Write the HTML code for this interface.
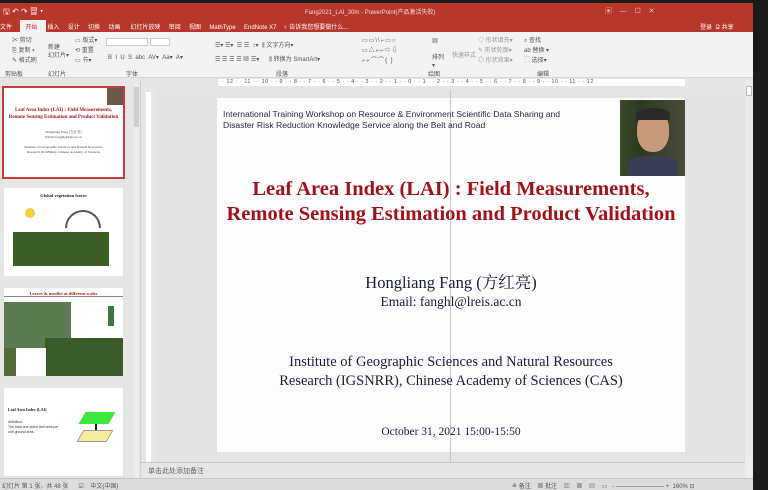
<!DOCTYPE html>
<html><head><meta charset="utf-8"><style>
*{margin:0;padding:0;box-sizing:border-box}
body{width:768px;height:490px;overflow:hidden;background:#1a1a1a;font-family:"Liberation Sans","Noto Sans CJK SC",sans-serif;position:relative}
.a{position:absolute}
.t{font-size:6px;color:#fff}
.r{font-size:6px;color:#555;white-space:nowrap}
.serif{font-family:"Liberation Serif","Noto Serif CJK SC",serif}
</style></head><body>
<div class="a" style="left:0;top:3px;width:753px;height:487px;background:#e6e6e6"></div>
<div class="a" style="left:0;top:3px;width:753px;height:29px;background:#b8372b"></div>
<div class="a t" style="left:3px;top:6px;font-size:8px">🖫 ↶ ↷ 冒 ▾</div>
<div class="a t" style="left:305px;top:7px;opacity:.8">Fang2021_LAI_30m - PowerPoint(产品激活失败)</div>
<div class="a t" style="left:605px;top:6px;opacity:.7;font-size:7px">▣ &nbsp;&nbsp; — &nbsp;&nbsp; ☐ &nbsp;&nbsp; ✕</div>
<div class="a" style="left:20px;top:20px;width:26px;height:12px;background:#f2f2f2"></div>
<div class="a t" style="left:0;top:22px;white-space:nowrap">文件 &nbsp;&nbsp;&nbsp;&nbsp;&nbsp;&nbsp; <span style="color:#b8372b">开始</span> &nbsp;&nbsp;&nbsp;&nbsp; 插入 &nbsp;&nbsp;&nbsp; 设计 &nbsp;&nbsp;&nbsp; 切换 &nbsp;&nbsp;&nbsp; 动画 &nbsp;&nbsp;&nbsp;&nbsp; 幻灯片放映 &nbsp;&nbsp;&nbsp; 审阅 &nbsp;&nbsp;&nbsp; 视图 &nbsp;&nbsp;&nbsp; MathType &nbsp;&nbsp;&nbsp; EndNote X7 &nbsp;&nbsp; ♀ 告诉我您想要做什么...</div>
<div class="a t" style="left:700px;top:22px">登录 &nbsp;Ձ 共享</div>
<div class="a" style="left:0;top:32px;width:753px;height:46px;background:#f3f3f3;border-bottom:1px solid #d6d6d6"></div>
<div class="a r" style="left:12px;top:36px;line-height:10px">✂ 剪切<br>⎘ 复制 ▾<br>✎ 格式刷</div>
<div class="a r" style="left:48px;top:44px;line-height:8px">新建<br>幻灯片▾</div>
<div class="a r" style="left:75px;top:36px;line-height:10px">▭ 版式▾<br>⟲ 重置<br>▭ 节▾</div>
<div class="a" style="left:106px;top:38px;width:42px;height:8px;background:#fff;border:1px solid #ccc"></div>
<div class="a" style="left:150px;top:38px;width:20px;height:8px;background:#fff;border:1px solid #ccc"></div>
<div class="a r" style="left:108px;top:54px">B &nbsp;I &nbsp;U &nbsp;S &nbsp;abc &nbsp;AV▾ &nbsp;Aa▾ &nbsp;A▾</div>
<div class="a r" style="left:215px;top:40px">☰▾ ☰▾ &nbsp;☰ ☰ &nbsp;↕▾ &nbsp;⫼ 文字方向▾</div>
<div class="a r" style="left:215px;top:54px">☰ ☰ ☰ ☰ ▦ ☰▾ &nbsp;&nbsp;&nbsp;&nbsp; ⫼ 转换为 SmartArt▾</div>
<div class="a r" style="left:362px;top:36px;line-height:10px;letter-spacing:1px">▭▭\\⌐▭○<br>▭△⌐⌐⇨⇩<br>⌐⌐⌒⌒{ }</div>
<div class="a r" style="left:432px;top:38px;line-height:8px">▦<br><br>排列<br>▾</div>
<div class="a r" style="left:452px;top:50px;color:#999">快速样式</div>
<div class="a r" style="left:478px;top:36px;line-height:10px;color:#999">◇ 形状填充▾<br>✎ 形状轮廓▾<br>◎ 形状效果▾</div>
<div class="a r" style="left:524px;top:36px;line-height:10px">⌕ 查找<br>ab 替换 ▾<br>⬚ 选择▾</div>
<div class="a r" style="left:5px;top:69px">剪贴板 &nbsp;&nbsp;&nbsp;&nbsp;&nbsp;&nbsp;&nbsp;&nbsp;&nbsp;&nbsp;&nbsp;&nbsp;&nbsp; 幻灯片 &nbsp;&nbsp;&nbsp;&nbsp;&nbsp;&nbsp;&nbsp;&nbsp;&nbsp;&nbsp;&nbsp;&nbsp;&nbsp;&nbsp;&nbsp;&nbsp;&nbsp;&nbsp;&nbsp;&nbsp;&nbsp;&nbsp;&nbsp;&nbsp;&nbsp;&nbsp;&nbsp;&nbsp;&nbsp;&nbsp;&nbsp;&nbsp;&nbsp;&nbsp; 字体</div>
<div class="a r" style="left:276px;top:69px">段落</div>
<div class="a r" style="left:428px;top:69px">绘图</div>
<div class="a r" style="left:537px;top:69px">编辑</div>
<div class="a" style="left:218px;top:79px;width:467px;height:7px;background:#fff"></div>
<div class="a r" style="left:222px;top:79px;font-size:5.5px;letter-spacing:.5px">· 12 · · 11 · · 10 · · 9 · · 8 · · 7 · · 6 · · 5 · · 4 · · 3 · · 2 · · 1 · · 0 · · 1 · · 2 · · 3 · · 4 · · 5 · · 6 · · 7 · · 8 · · 9 · · 10 · · 11 · · 12 ·</div>
<div class="a" style="left:146px;top:92px;width:5px;height:370px;background:#fff"></div>
<div class="a" style="left:140px;top:80px;width:1px;height:398px;background:#d0d0d0"></div>
<div class="a" style="left:134px;top:82px;width:5px;height:396px;background:#ececec"></div>
<div class="a" style="left:134px;top:87px;width:5px;height:40px;background:#cfcfcf"></div>
<div class="a" style="left:2px;top:86px;width:123px;height:93px;border:2px solid #c43b3b;background:#fff"></div>
<div class="a serif" style="left:4px;top:107px;width:119px;text-align:center;font-size:5px;font-weight:bold;color:#a01818;line-height:7px">Leaf Area Index (LAI) : Field Measurements,<br>Remote Sensing Estimation and Product Validation</div>
<div class="a" style="left:107px;top:88px;width:16px;height:17px;background:#6b5a4a"></div>
<div class="a serif" style="left:4px;top:130px;width:119px;text-align:center;font-size:3.5px;color:#444;line-height:5px">Hongliang Fang (方红亮)<br>Email: fanghl@lreis.ac.cn<br><br>Institute of Geographic Sciences and Natural Resources<br>Research (IGSNRR), Chinese Academy of Sciences</div>
<div class="a" style="left:4px;top:188px;width:119px;height:88px;background:#fff"></div>
<div class="a serif" style="left:4px;top:193px;width:119px;text-align:center;font-size:4.5px;font-weight:bold;color:#223">Global vegetation leaves</div>
<div class="a" style="left:25px;top:208px;width:10px;height:10px;border-radius:50%;background:#f0d040"></div>
<div class="a" style="left:65px;top:210px;width:36px;height:18px;border:2px solid #555;border-bottom:none;border-radius:18px 18px 0 0"></div>
<div class="a" style="left:13px;top:232px;width:96px;height:34px;background:#3e5e28"></div>
<div class="a" style="left:4px;top:288px;width:119px;height:88px;background:#fff"></div>
<div class="a serif" style="left:4px;top:291px;width:119px;text-align:center;font-size:4.5px;font-weight:bold;color:#b02020;border-bottom:1px solid #888">Leaves &amp; needles at different scales</div>
<div class="a" style="left:4px;top:302px;width:67px;height:46px;background:#5d7a52"></div>
<div class="a" style="left:45px;top:338px;width:78px;height:38px;background:#3b5a2a"></div>
<div class="a" style="left:4px;top:348px;width:42px;height:28px;background:#fff"></div>
<div class="a" style="left:4px;top:348px;width:12px;height:28px;background:#556b3c"></div>
<div class="a" style="left:108px;top:306px;width:6px;height:20px;background:#3c7a3c"></div>
<div class="a" style="left:4px;top:388px;width:119px;height:88px;background:#fff"></div>
<div class="a serif" style="left:8px;top:407px;font-size:4px;font-weight:bold;color:#222">Leaf Area Index (LAI)</div>
<div class="a" style="left:8px;top:420px;font-size:3.5px;color:#333;line-height:5px">definition:<br>The total one-sided leaf area per<br>unit ground area.</div>
<div class="a" style="left:82px;top:412px;width:30px;height:12px;background:#3ee83e;transform:skewX(-30deg)"></div>
<div class="a" style="left:95px;top:424px;width:2px;height:8px;background:#222"></div>
<div class="a" style="left:80px;top:430px;width:30px;height:12px;background:#f4f0a0;transform:skewX(-30deg);border:1px solid #999"></div>
<div class="a" style="left:155px;top:90px;width:592px;height:372px;background:#e4e4e4"></div>
<div class="a" style="left:217px;top:98px;width:468px;height:354px;background:#fdfdfd"></div>
<div class="a" style="left:450px;top:90px;width:1px;height:372px;background:#c8c8c8"></div>
<div class="a" style="left:223px;top:109px;font-size:8.6px;color:#2a2a40;line-height:10.5px">International Training Workshop on Resource &amp; Environment Scientific Data Sharing and<br>Disaster Risk Reduction Knowledge Service along the Belt and Road</div>
<div class="a" style="left:620px;top:100px;width:65px;height:76px;background:linear-gradient(90deg,#3a4a2a,#2c3a22 30%,#4a4a3a)"></div>
<div class="a" style="left:637px;top:110px;width:32px;height:42px;border-radius:45%;background:#c89a7c"></div>
<div class="a" style="left:636px;top:108px;width:34px;height:12px;border-radius:50% 50% 10% 10%;background:#2a2a2a"></div>
<div class="a" style="left:628px;top:156px;width:50px;height:20px;border-radius:40% 40% 0 0;background:#3a3e52"></div>
<div class="a serif" style="left:207px;top:177px;width:488px;text-align:center;font-size:20.5px;font-weight:bold;color:#a01218;line-height:25px">Leaf Area Index (LAI) : Field Measurements,<br>Remote Sensing Estimation and Product Validation</div>
<div class="a serif" style="left:217px;top:269px;width:468px;text-align:center;font-size:16.5px;color:#1a1a3a">Hongliang Fang (方红亮)</div>
<div class="a serif" style="left:217px;top:294px;width:468px;text-align:center;font-size:13.5px;color:#1a1a3a">Email: fanghl@lreis.ac.cn</div>
<div class="a serif" style="left:217px;top:353px;width:468px;text-align:center;font-size:14.5px;color:#1a1a3a;line-height:19px">Institute of Geographic Sciences and Natural Resources<br>Research (IGSNRR), Chinese Academy of Sciences (CAS)</div>
<div class="a serif" style="left:217px;top:426px;width:468px;text-align:center;font-size:11.5px;color:#1a1a3a">October 31, 2021 15:00-15:50</div>
<div class="a" style="left:745px;top:80px;width:8px;height:398px;background:#ececec"></div>
<div class="a" style="left:746px;top:86px;width:6px;height:10px;background:#fff;border:1px solid #bbb"></div>
<div class="a" style="left:140px;top:462px;width:605px;height:1px;background:#c8c8c8"></div>
<div class="a r" style="left:148px;top:466px;font-size:7px;color:#666">单击此处添加备注</div>
<div class="a" style="left:0;top:478px;width:753px;height:12px;background:#dcdcdc;border-top:1px solid #c8c8c8"></div>
<div class="a r" style="left:2px;top:481px">幻灯片 第 1 张，共 48 张 &nbsp;&nbsp;&nbsp;&nbsp; ☑ &nbsp;&nbsp; 中文(中国)</div>
<div class="a r" style="left:512px;top:481px">≙ 备注 &nbsp;&nbsp; ▦ 批注 &nbsp;&nbsp; ▥ &nbsp;&nbsp; ▦ &nbsp;&nbsp; ▤ &nbsp;&nbsp; ▭ &nbsp; - ———————— + &nbsp;160% ⊡</div>
</body></html>
